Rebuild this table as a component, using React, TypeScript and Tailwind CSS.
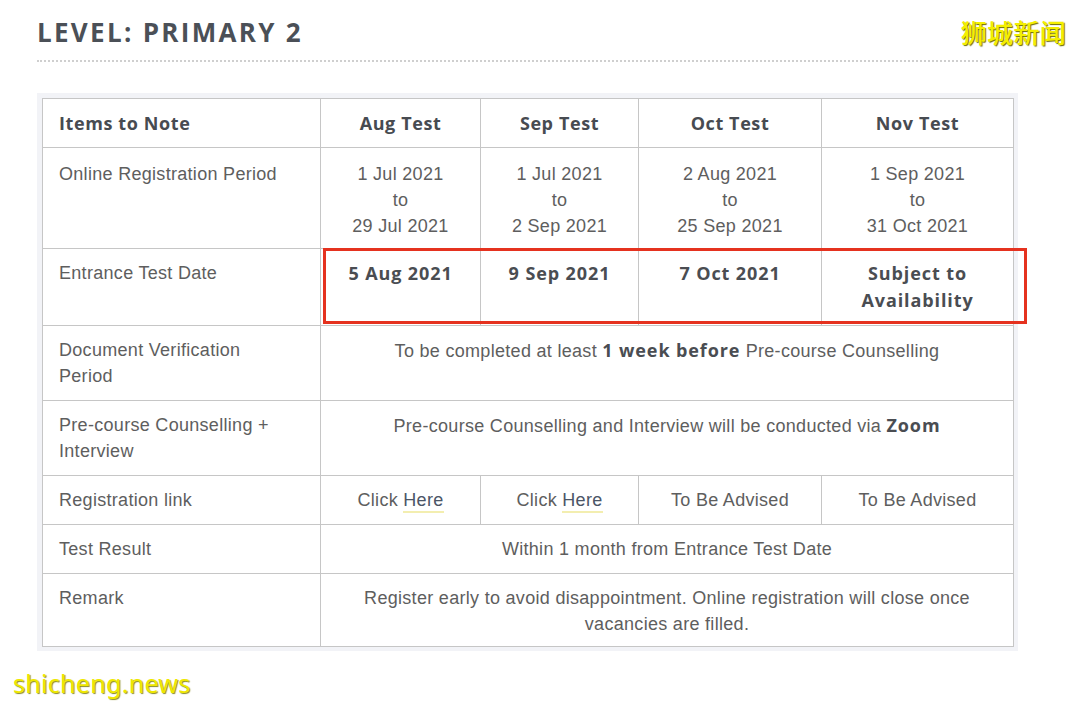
import React from 'react';

const cell = 'border border-[#c6c6c6] px-4 py-[11px] align-top';
const head = `${cell} font-['Open_Sans',sans-serif] text-[18px] font-bold tracking-[0.6px] text-[#474b51]`;
const bold = "font-['Open_Sans',sans-serif] font-bold text-[18px] tracking-[0.9px] text-[#4a4d52]";

const Here = () => (
  <span className="border-b-2 border-[#f3eeb0] pb-[1px] text-[#4b5566]">Here</span>
);

export default function App() {
  return (
    <div className="relative h-[703px] w-[1080px] overflow-hidden bg-white font-['Liberation_Sans',Arial,sans-serif] text-[18px] leading-[26px] tracking-[0.3px] text-[#5e5e5e]">
      <div className="pl-[37px] pr-[62px] pt-[15px]">
        <h2 className="font-['Open_Sans',sans-serif] text-[26px] font-bold leading-[34px] tracking-[2.3px] text-[#4b5057]">
          LEVEL: PRIMARY 2
        </h2>
        <div className="mt-[11px] border-b-2 border-dotted border-[#cfcfcf]" />

        <div className="relative mt-[31px] w-[981px] bg-[#f2f3f7] pb-[4px] pl-[5px] pr-[5px] pt-[5px]">
          <table className="w-[971px] table-fixed border-collapse bg-white">
            <colgroup>
              <col className="w-[278px]" />
              <col className="w-[160px]" />
              <col className="w-[158px]" />
              <col className="w-[183px]" />
              <col className="w-[192px]" />
            </colgroup>
            <tbody>
              <tr>
                <td className={`${head} text-left`}>Items to Note</td>
                <td className={`${head} text-center`}>Aug Test</td>
                <td className={`${head} text-center`}>Sep Test</td>
                <td className={`${head} text-center`}>Oct Test</td>
                <td className={`${head} text-center`}>Nov Test</td>
              </tr>
              <tr>
                <td className={`${cell} pt-[13px] pb-[9px]`}>Online Registration Period</td>
                <td className={`${cell} pt-[13px] pb-[9px] text-center`}>1 Jul 2021<br />to<br />29 Jul 2021</td>
                <td className={`${cell} pt-[13px] pb-[9px] text-center`}>1 Jul 2021<br />to<br />2 Sep 2021</td>
                <td className={`${cell} pt-[13px] pb-[9px] text-center`}>2 Aug 2021<br />to<br />25 Sep 2021</td>
                <td className={`${cell} pt-[13px] pb-[9px] text-center`}>1 Sep 2021<br />to<br />31 Oct 2021</td>
              </tr>
              <tr>
                <td className={cell}>Entrance Test Date</td>
                <td className={`${cell} text-center`}><span className={bold}>5 Aug 2021</span></td>
                <td className={`${cell} text-center`}><span className={bold}>9 Sep 2021</span></td>
                <td className={`${cell} text-center`}><span className={bold}>7 Oct 2021</span></td>
                <td className={`${cell} text-center`}><span className={bold}>Subject to<br />Availability</span></td>
              </tr>
              <tr>
                <td className={cell}>Document Verification<br />Period</td>
                <td colSpan={4} className={`${cell} text-center`}>
                  To be completed at least <span className={bold}>1 week before</span> Pre-course Counselling
                </td>
              </tr>
              <tr>
                <td className={cell}>Pre-course Counselling +<br />Interview</td>
                <td colSpan={4} className={`${cell} text-center`}>
                  Pre-course Counselling and Interview will be conducted via <span className={bold}>Zoom</span>
                </td>
              </tr>
              <tr>
                <td className={cell}>Registration link</td>
                <td className={`${cell} text-center`}>Click <Here /></td>
                <td className={`${cell} text-center`}>Click <Here /></td>
                <td className={`${cell} text-center`}>To Be Advised</td>
                <td className={`${cell} text-center`}>To Be Advised</td>
              </tr>
              <tr>
                <td className={cell}>Test Result</td>
                <td colSpan={4} className={`${cell} text-center`}>Within 1 month from Entrance Test Date</td>
              </tr>
              <tr>
                <td className={`${cell} pb-[9px]`}>Remark</td>
                <td colSpan={4} className={`${cell} pb-[9px] text-center`}>
                  Register early to avoid disappointment. Online registration will close once<br />vacancies are filled.
                </td>
              </tr>
            </tbody>
          </table>

          <div className="pointer-events-none absolute left-[286px] top-[155px] h-[76px] w-[704px] border-[3px] border-[#e5321f]" />
        </div>
      </div>

      <div className="absolute right-[14px] top-[13px] font-['Noto_Sans_CJK_SC',sans-serif] text-[26px] font-medium leading-[38px] text-[#f4ef00] [text-shadow:1px_1px_1px_#6b6b00]">
        狮城新闻
      </div>
      <div className="absolute left-[13px] top-[665px] font-['Noto_Sans',sans-serif] text-[25px] leading-[36px] text-[#efe800] [text-shadow:1px_1px_1px_#8a8a20]">
        shicheng.news
      </div>
    </div>
  );
}
